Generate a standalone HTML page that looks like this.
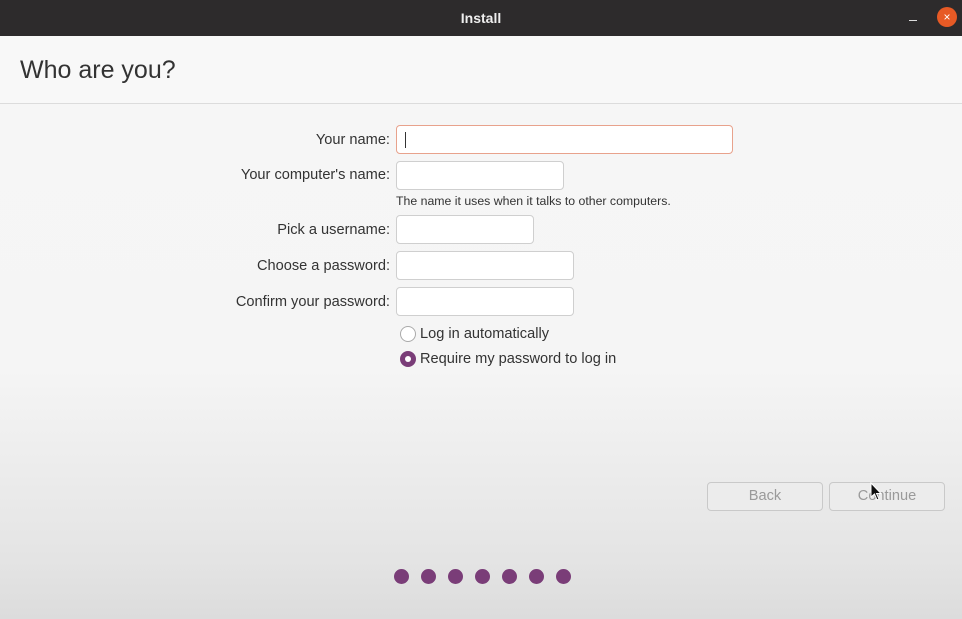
<!DOCTYPE html>
<html><head><style>
*{margin:0;padding:0;box-sizing:border-box}
body{width:962px;height:619px;overflow:hidden;font-family:"Liberation Sans","DejaVu Sans",sans-serif;background:linear-gradient(#f6f6f6 0px,#f5f5f5 370px,#e4e4e4 560px,#dcdcdc 619px);position:relative;color:#3c3c3c}
.tb{position:absolute;left:0;top:0;width:962px;height:36px;background:#2d2b2c;color:#eee;font-weight:bold;font-size:14px;text-align:center;line-height:36px}
.hd{position:absolute;left:0;top:36px;width:962px;height:68px;background:#f8f8f8;border-bottom:1px solid #dcdcdc}
.hd h1{position:absolute;left:20px;top:20px;font-weight:normal;font-size:25px;color:#333}
.l{position:absolute;right:572px;font-size:14.6px;color:#333;white-space:nowrap}
.in{position:absolute;left:396px;height:29px;background:#fff;border:1px solid #cfcfcf;border-radius:4px}
.t{position:absolute;font-size:14.6px;color:#333;white-space:nowrap}
.btn{position:absolute;top:482px;height:29px;border:1px solid #c9c9c9;border-radius:4px;background:#ececec;color:#9a9a9a;font-size:14.6px;text-align:center;line-height:27px}
.d{position:absolute;top:569px;width:15px;height:15px;border-radius:50%;background:#7a3d78}
</style></head><body>
<div class="tb">Install
<div style="position:absolute;left:909px;top:20px;width:8px;height:1px;background:#ddd"></div>
<span style="position:absolute;left:937px;top:7px;width:20px;height:20px;border-radius:50%;background:#e75a25;color:#fff;font-size:12px;line-height:20px;font-weight:normal">×</span>
</div>
<div class="hd"><h1>Who are you?</h1></div>
<div class="l" style="top:132px">Your name:</div>
<div class="in" style="top:125px;width:337px;border-color:#e8a28c"><div style="position:absolute;left:8px;top:6px;width:1px;height:16px;background:#333"></div></div>
<div class="l" style="top:167px">Your computer's name:</div>
<div class="in" style="top:161px;width:168px"></div>
<div class="t" style="left:396px;top:194px;font-size:12.3px">The name it uses when it talks to other computers.</div>
<div class="l" style="top:222px">Pick a username:</div>
<div class="in" style="top:215px;width:138px"></div>
<div class="l" style="top:258px">Choose a password:</div>
<div class="in" style="top:251px;width:178px"></div>
<div class="l" style="top:294px">Confirm your password:</div>
<div class="in" style="top:287px;width:178px"></div>
<div style="position:absolute;left:400px;top:326px;width:16px;height:16px;border-radius:50%;border:1px solid #aaa;background:#fff"></div>
<div class="t" style="left:420px;top:326px">Log in automatically</div>
<div style="position:absolute;left:400px;top:351px;width:16px;height:16px;border-radius:50%;background:#7a3d78"><div style="position:absolute;left:5px;top:5px;width:6px;height:6px;border-radius:50%;background:#fff"></div></div>
<div class="t" style="left:420px;top:351px">Require my password to log in</div>
<div class="btn" style="left:707px;width:116px">Back</div>
<div class="btn" style="left:829px;width:116px">Continue</div>
<div class="d" style="left:394px"></div><div class="d" style="left:421px"></div><div class="d" style="left:448px"></div><div class="d" style="left:475px"></div><div class="d" style="left:502px"></div><div class="d" style="left:529px"></div><div class="d" style="left:556px"></div>
<svg style="position:absolute;left:870px;top:482px" width="14" height="20"><path d="M1 1 L1 15 L4.5 12 L7 18 L9 17 L6.5 11.5 L11 11.5 Z" fill="#111" stroke="#fff" stroke-width="1"/></svg>
</body></html>
